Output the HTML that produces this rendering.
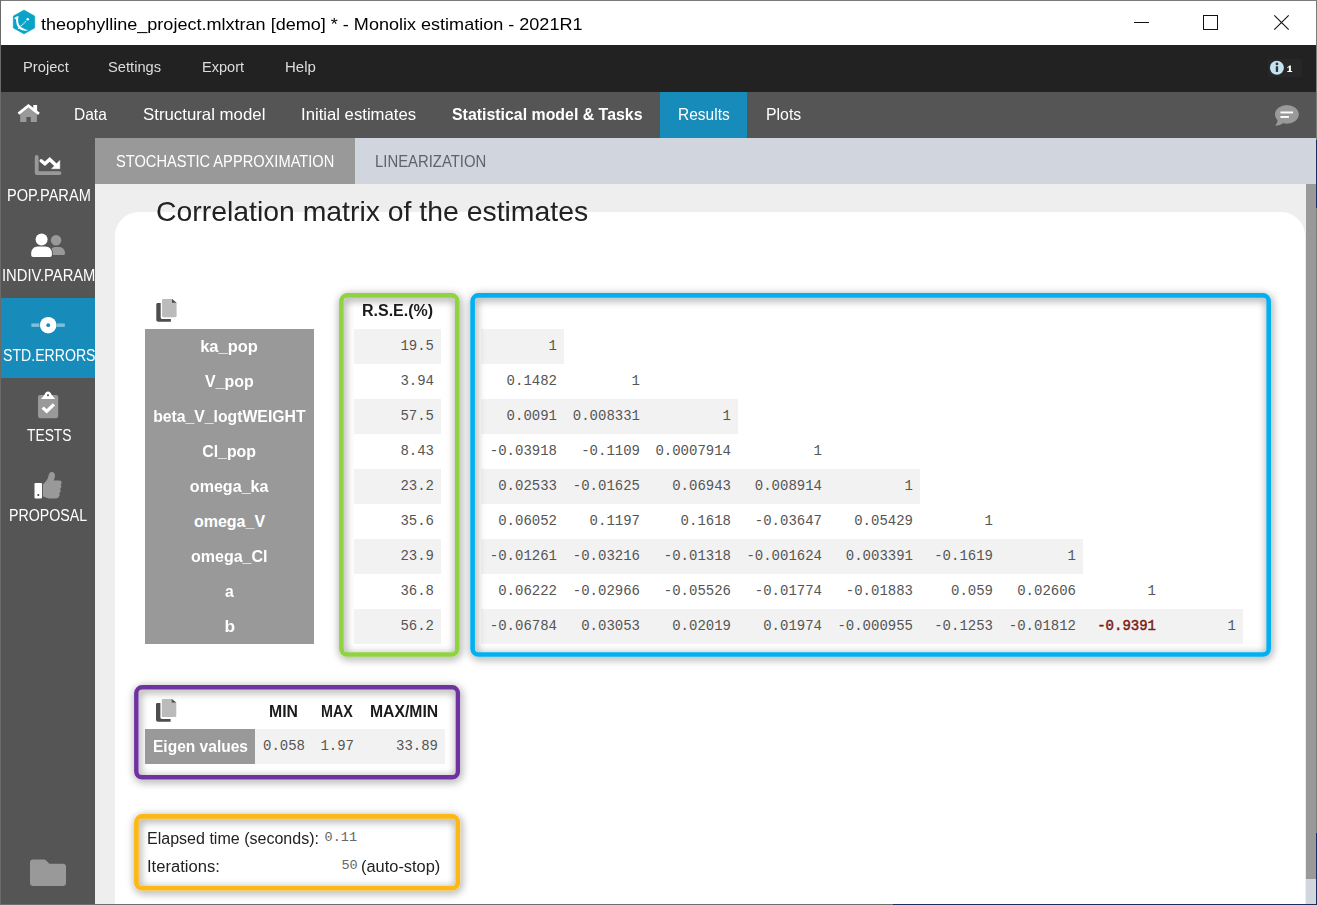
<!DOCTYPE html>
<html>
<head>
<meta charset="utf-8">
<title>Monolix</title>
<style>
*{box-sizing:border-box;margin:0;padding:0}
html,body{width:1317px;height:905px;overflow:hidden;background:#eeeeee;font-family:"Liberation Sans",sans-serif;}
.abs{position:absolute}
.t{position:absolute;white-space:nowrap;line-height:1;transform-origin:0 0}
#win{position:absolute;left:0;top:0;width:1317px;height:905px;overflow:hidden;background:#eeeeee}
#titlebar{left:1px;top:1px;width:1315px;height:44px;background:#fff}
#menubar{left:1px;top:45px;width:1315px;height:47px;background:#222222}
#navbar{left:1px;top:92px;width:1315px;height:46px;background:#555555}
#sidebar{left:1px;top:138px;width:94px;height:766px;background:#555555;overflow:hidden}
#subtabs{left:95px;top:138px;width:1221px;height:46px;background:#d0d5de}
#content{left:95px;top:184px;width:1211px;height:720px;background:#eeeeee}
#card{left:115px;top:212px;width:1190px;height:720px;background:#fff;border-radius:24px}
.mono{font-family:"Liberation Mono",monospace}
.box{position:absolute;border:4.6px solid;border-radius:7.5px;box-shadow:2px 2px 7px rgba(0,0,0,.42), inset 2px 2px 7px rgba(0,0,0,.42)}
.rh{position:absolute;left:145px;width:169px;height:35px;color:#fff;font-weight:bold;font-size:16px;text-align:center;line-height:35px;white-space:nowrap}
.cell{position:absolute;height:35px;line-height:35px;font-family:"Liberation Mono",monospace;font-size:14px;color:#555;text-align:right;padding-right:7px;white-space:nowrap}
.g{background:#f2f2f2}
.sx{display:inline-block;transform-origin:50% 50%}
svg{position:absolute;overflow:visible}
</style>
</head>
<body>
<div id="win">
  <div class="abs" id="titlebar"></div>
  <div class="abs" id="menubar"></div>
  <div class="abs" id="navbar"></div>
  <div class="abs" id="sidebar"></div>
  <div class="abs" id="subtabs"></div>
  <div class="abs" id="content"></div>
  <div class="abs" id="card"></div>

  <!-- TITLE -->
  <div class="t" id="ttl" style="left:40.80px;top:15.71px;font-size:17px;font-weight:normal;color:#000;transform:scaleX(1.0612)">theophylline_project.mlxtran [demo] * - Monolix estimation - 2021R1</div>

  <!-- MENU -->
  <div class="t" id="m1" style="left:22.50px;top:59.30px;font-size:15px;font-weight:normal;color:#dddddd;transform:scaleX(0.9810)">Project</div>
  <div class="t" id="m2" style="left:108.20px;top:59.30px;font-size:15px;font-weight:normal;color:#dddddd;transform:scaleX(0.9796)">Settings</div>
  <div class="t" id="m3" style="left:201.70px;top:59.30px;font-size:15px;font-weight:normal;color:#dddddd;transform:scaleX(0.9710)">Export</div>
  <div class="t" id="m4" style="left:284.80px;top:59.30px;font-size:15px;font-weight:normal;color:#dddddd;transform:scaleX(0.9981)">Help</div>

  <!-- NAV -->
  <div class="abs" style="left:660px;top:92px;width:87px;height:46px;background:#178bba"></div>
  <div class="t" id="n1" style="left:74.00px;top:106.03px;font-size:16.5px;font-weight:normal;color:#fff;transform:scaleX(0.9409)">Data</div>
  <div class="t" id="n2" style="left:142.50px;top:106.03px;font-size:16.5px;font-weight:normal;color:#fff;transform:scaleX(1.0188)">Structural model</div>
  <div class="t" id="n3" style="left:300.80px;top:106.03px;font-size:16.5px;font-weight:normal;color:#fff;transform:scaleX(1.0121)">Initial estimates</div>
  <div class="t" id="n4" style="left:451.50px;top:106.03px;font-size:16.5px;font-weight:bold;color:#fff;transform:scaleX(0.9632)">Statistical model &amp; Tasks</div>
  <div class="t" id="n5" style="left:678.30px;top:106.03px;font-size:16.5px;font-weight:normal;color:#fff;transform:scaleX(0.9395)">Results</div>
  <div class="t" id="n6" style="left:766.00px;top:106.03px;font-size:16.5px;font-weight:normal;color:#fff;transform:scaleX(0.9595)">Plots</div>

  <!-- SUBTABS -->
  <div class="abs" style="left:95px;top:138px;width:260px;height:46px;background:#999999"></div>
  <div class="t" id="s1" style="left:115.80px;top:153.03px;font-size:16.5px;font-weight:normal;color:#fff;transform:scaleX(0.8873)">STOCHASTIC APPROXIMATION</div>
  <div class="t" id="s2" style="left:375.40px;top:153.03px;font-size:16.5px;font-weight:normal;color:#5f636b;transform:scaleX(0.9014)">LINEARIZATION</div>

  <!-- SIDEBAR -->
  <div class="abs" style="left:1px;top:298px;width:94px;height:80px;background:#178bba"></div>
  <div class="abs" style="left:0;top:0;width:95px;height:905px;overflow:hidden">
  <div class="t" id="sb1" style="left:6.70px;top:188.26px;font-size:16px;font-weight:normal;color:#fff;transform:scaleX(0.9120)">POP.PARAM</div>
  <div class="t" id="sb2" style="left:2.10px;top:268.26px;font-size:16px;font-weight:normal;color:#fff;transform:scaleX(0.9215)">INDIV.PARAM</div>
  <div class="t" id="sb3" style="left:2.70px;top:347.96px;font-size:16px;font-weight:normal;color:#fff;transform:scaleX(0.8817)">STD.ERRORS</div>
  <div class="t" id="sb4" style="left:26.50px;top:428.26px;font-size:16px;font-weight:normal;color:#fff;transform:scaleX(0.8630)">TESTS</div>
  <div class="t" id="sb5" style="left:9.30px;top:508.26px;font-size:16px;font-weight:normal;color:#fff;transform:scaleX(0.8883)">PROPOSAL</div>
  </div>

  <!-- HEADING -->
  <div class="t" id="h1" style="left:156.20px;top:197.80px;font-size:28px;font-weight:normal;color:#222;transform:scaleX(1.0134)">Correlation matrix of the estimates</div>

  <!-- TABLE -->
  <div class="abs" style="left:145px;top:329px;width:169px;height:315px;background:#999999"></div>
  <div class="rh" style="top:329px"><span class="sx" style="transform:scaleX(1.0295)">ka_pop</span></div>
  <div class="cell g" style="left:354px;top:329px;width:87px">19.5</div>
  <div class="cell g" style="left:481px;top:329px;width:83px">1</div>
  <div class="rh" style="top:364px"><span class="sx" style="transform:scaleX(0.9951)">V_pop</span></div>
  <div class="cell" style="left:354px;top:364px;width:87px">3.94</div>
  <div class="cell" style="left:481px;top:364px;width:83px">0.1482</div>
  <div class="cell" style="left:564px;top:364px;width:83px">1</div>
  <div class="rh" style="top:399px"><span class="sx" style="transform:scaleX(0.9852)">beta_V_logtWEIGHT</span></div>
  <div class="cell g" style="left:354px;top:399px;width:87px">57.5</div>
  <div class="cell g" style="left:481px;top:399px;width:83px">0.0091</div>
  <div class="cell g" style="left:564px;top:399px;width:83px">0.008331</div>
  <div class="cell g" style="left:647px;top:399px;width:91px">1</div>
  <div class="rh" style="top:434px"><span class="sx" style="transform:scaleX(0.9931)">Cl_pop</span></div>
  <div class="cell" style="left:354px;top:434px;width:87px">8.43</div>
  <div class="cell" style="left:481px;top:434px;width:83px">-0.03918</div>
  <div class="cell" style="left:564px;top:434px;width:83px">-0.1109</div>
  <div class="cell" style="left:647px;top:434px;width:91px">0.0007914</div>
  <div class="cell" style="left:738px;top:434px;width:91px">1</div>
  <div class="rh" style="top:469px"><span class="sx" style="transform:scaleX(1.0049)">omega_ka</span></div>
  <div class="cell g" style="left:354px;top:469px;width:87px">23.2</div>
  <div class="cell g" style="left:481px;top:469px;width:83px">0.02533</div>
  <div class="cell g" style="left:564px;top:469px;width:83px">-0.01625</div>
  <div class="cell g" style="left:647px;top:469px;width:91px">0.06943</div>
  <div class="cell g" style="left:738px;top:469px;width:91px">0.008914</div>
  <div class="cell g" style="left:829px;top:469px;width:91px">1</div>
  <div class="rh" style="top:504px"><span class="sx" style="transform:scaleX(1.0000)">omega_V</span></div>
  <div class="cell" style="left:354px;top:504px;width:87px">35.6</div>
  <div class="cell" style="left:481px;top:504px;width:83px">0.06052</div>
  <div class="cell" style="left:564px;top:504px;width:83px">0.1197</div>
  <div class="cell" style="left:647px;top:504px;width:91px">0.1618</div>
  <div class="cell" style="left:738px;top:504px;width:91px">-0.03647</div>
  <div class="cell" style="left:829px;top:504px;width:91px">0.05429</div>
  <div class="cell" style="left:920px;top:504px;width:80px">1</div>
  <div class="rh" style="top:539px"><span class="sx" style="transform:scaleX(1.0029)">omega_Cl</span></div>
  <div class="cell g" style="left:354px;top:539px;width:87px">23.9</div>
  <div class="cell g" style="left:481px;top:539px;width:83px">-0.01261</div>
  <div class="cell g" style="left:564px;top:539px;width:83px">-0.03216</div>
  <div class="cell g" style="left:647px;top:539px;width:91px">-0.01318</div>
  <div class="cell g" style="left:738px;top:539px;width:91px">-0.001624</div>
  <div class="cell g" style="left:829px;top:539px;width:91px">0.003391</div>
  <div class="cell g" style="left:920px;top:539px;width:80px">-0.1619</div>
  <div class="cell g" style="left:1000px;top:539px;width:83px">1</div>
  <div class="rh" style="top:574px"><span class="sx" style="transform:scaleX(0.9852)">a</span></div>
  <div class="cell" style="left:354px;top:574px;width:87px">36.8</div>
  <div class="cell" style="left:481px;top:574px;width:83px">0.06222</div>
  <div class="cell" style="left:564px;top:574px;width:83px">-0.02966</div>
  <div class="cell" style="left:647px;top:574px;width:91px">-0.05526</div>
  <div class="cell" style="left:738px;top:574px;width:91px">-0.01774</div>
  <div class="cell" style="left:829px;top:574px;width:91px">-0.01883</div>
  <div class="cell" style="left:920px;top:574px;width:80px">0.059</div>
  <div class="cell" style="left:1000px;top:574px;width:83px">0.02606</div>
  <div class="cell" style="left:1083px;top:574px;width:80px">1</div>
  <div class="rh" style="top:609px"><span class="sx" style="transform:scaleX(1.0837)">b</span></div>
  <div class="cell g" style="left:354px;top:609px;width:87px">56.2</div>
  <div class="cell g" style="left:481px;top:609px;width:83px">-0.06784</div>
  <div class="cell g" style="left:564px;top:609px;width:83px">0.03053</div>
  <div class="cell g" style="left:647px;top:609px;width:91px">0.02019</div>
  <div class="cell g" style="left:738px;top:609px;width:91px">0.01974</div>
  <div class="cell g" style="left:829px;top:609px;width:91px">-0.000955</div>
  <div class="cell g" style="left:920px;top:609px;width:80px">-0.1253</div>
  <div class="cell g" style="left:1000px;top:609px;width:83px">-0.01812</div>
  <div class="cell g" style="left:1083px;top:609px;width:80px;color:#7d1a12;-webkit-text-stroke:0.45px #7d1a12">-0.9391</div>
  <div class="cell g" style="left:1163px;top:609px;width:80px">1</div>

  <!-- BOXES -->
  <svg width="1317" height="905" viewBox="0 0 1317 905" style="left:0;top:0">
    <defs><filter id="sh" x="0" y="0" width="1317" height="905" filterUnits="userSpaceOnUse">
      <feGaussianBlur in="SourceAlpha" stdDeviation="4" result="b"/>
      <feOffset in="b" dx="1.4" dy="1.5" result="o"/>
      <feComponentTransfer in="o" result="s"><feFuncA type="linear" slope="0.5"/></feComponentTransfer>
      <feMerge><feMergeNode in="s"/><feMergeNode in="SourceGraphic"/></feMerge>
    </filter></defs>
    <rect x="341.40" y="295.40" width="115.90" height="359.10" rx="5.70" fill="none" stroke="#90d340" stroke-width="4.6" filter="url(#sh)"/>
    <rect x="472.60" y="295.40" width="796.10" height="359.10" rx="5.70" fill="none" stroke="#00b0f0" stroke-width="4.6" filter="url(#sh)"/>
    <rect x="136.30" y="687.30" width="321.60" height="90.00" rx="5.80" fill="none" stroke="#7030a0" stroke-width="4.4" filter="url(#sh)"/>
    <rect x="136.40" y="816.40" width="321.40" height="71.90" rx="5.70" fill="none" stroke="#fdb813" stroke-width="4.6" filter="url(#sh)"/>
  </svg>

  <!-- RSE header -->
  <div class="t" id="rseh" style="left:362.10px;top:303.06px;font-size:16px;font-weight:bold;color:#1a1a1a;transform:scaleX(0.9996)">R.S.E.(%)</div>

  <!-- EIGEN -->
  <div class="t" id="e1" style="left:269.40px;top:704.16px;font-size:16px;font-weight:bold;color:#1a1a1a;transform:scaleX(0.9854)">MIN</div>
  <div class="t" id="e2" style="left:321.00px;top:704.16px;font-size:16px;font-weight:bold;color:#1a1a1a;transform:scaleX(0.8942)">MAX</div>
  <div class="t" id="e3" style="left:369.50px;top:704.16px;font-size:16px;font-weight:bold;color:#1a1a1a;transform:scaleX(0.9837)">MAX/MIN</div>
  <div class="abs" style="left:145px;top:729px;width:110px;height:35px;background:#999999"></div>
  <div class="t" id="e4" style="left:153.20px;top:738.96px;font-size:16px;font-weight:bold;color:#fff;transform:scaleX(0.9711)">Eigen values</div>
  <div class="cell g" style="left:255px;top:729px;width:58px;padding-right:8px">0.058</div>
  <div class="cell g" style="left:313px;top:729px;width:48px">1.97</div>
  <div class="cell g" style="left:361px;top:729px;width:84px">33.89</div>

  <!-- ELAPSED -->
  <div class="t" id="l1" style="left:147.00px;top:830.96px;font-size:16px;font-weight:normal;color:#222;transform:scaleX(1.0021)">Elapsed time (seconds):</div>
  <div class="t mono" id="l2" style="left:324.60px;top:830.95px;font-size:13.5px;font-weight:normal;color:#666;transform:scaleX(1.0000)">0.11</div>
  <div class="t" id="l3" style="left:147.00px;top:858.86px;font-size:16px;font-weight:normal;color:#222;transform:scaleX(1.0361)">Iterations:</div>
  <div class="t mono" id="l4" style="left:341.40px;top:858.65px;font-size:13.5px;font-weight:normal;color:#666;transform:scaleX(1.0000)">50</div>
  <div class="t" id="l5" style="left:360.50px;top:858.86px;font-size:16px;font-weight:normal;color:#222;transform:scaleX(1.0249)">(auto-stop)</div>

  <!-- ICONS -->
  <svg width="1317" height="905" viewBox="0 0 1317 905" style="left:0;top:0">
    <!-- app logo -->
    <g>
      <polygon points="24,9.9 34.8,16 34.8,27.9 24,34.1 13.2,27.9 13.2,16" fill="#08a4c7" stroke="#08a4c7" stroke-width="0.4" stroke-linejoin="round"/>
      <path d="M14.3,18.6 C14.8,17.2 16.8,15.8 18.6,16.2 C18,18.5 18.1,20.8 18.4,22.9 C19,25.5 21,27.3 23,28.2 C24.8,29.1 26.8,29.8 28.4,30.3 C26,31 23.5,30.8 21.5,29.9 C19,28.6 17.6,27 16.9,24.9 C16.3,23.2 16,21 16,19.3 C15.4,19.4 14.8,19.1 14.3,18.6 Z" fill="#fff"/>
      <line x1="18.2" y1="28.7" x2="25.8" y2="21.3" stroke="#fff" stroke-width="1.1" stroke-dasharray="1.2 0.7"/>
      <circle cx="27.7" cy="19.2" r="1.3" fill="#fff"/>
    </g>
    <!-- window controls -->
    <rect x="1134" y="22" width="15" height="1" fill="#111"/>
    <rect x="1203.5" y="15.5" width="14" height="14" fill="none" stroke="#111" stroke-width="1"/>
    <path d="M1274.3,15.3 L1288.7,29.7 M1288.7,15.3 L1274.3,29.7" stroke="#111" stroke-width="1.1" fill="none"/>
    <!-- info badge -->
    <rect x="1268" y="59" width="34" height="18" fill="#272727"/>
    <circle cx="1276.9" cy="67.8" r="7" fill="#c3e2f2"/>
    <rect x="1275.8" y="66.3" width="2.3" height="5.6" fill="#333"/>
    <circle cx="1276.95" cy="63.9" r="1.35" fill="#333"/>
    <path d="M1287.2,67.4 L1289.6,65.6 L1290.9,65.6 L1290.9,71 L1292.2,71 L1292.2,71.9 L1287.3,71.9 L1287.3,71 L1288.9,71 L1288.9,67.3 L1287.2,68.3 Z" fill="#fff"/>
    <!-- home -->
    <path d="M20.2,112.9 L28.4,106.6 L36.9,113.2 L36.9,121.9 L30.7,121.9 L30.7,117 L26.4,117 L26.4,121.9 L20.2,121.9 Z" fill="#999"/>
    <rect x="33.3" y="105" width="3.8" height="6.5" fill="#fff"/>
    <path d="M19.5,112.8 L28.4,105.7 L37.9,113" fill="none" stroke="#fff" stroke-width="2.7" stroke-linecap="square" stroke-linejoin="miter"/>
    <!-- comment -->
    <ellipse cx="1286.9" cy="114.3" rx="11.9" ry="9.4" fill="#999"/>
    <path d="M1277.6,118.5 C1277.8,121.5 1276.8,124 1275.1,125.7 C1278.5,125.7 1281.5,124.6 1283.5,122.8 Z" fill="#999"/>
    <rect x="1280.4" y="111.5" width="12.7" height="1.9" fill="#fff"/>
    <rect x="1280.4" y="116" width="8.5" height="1.9" fill="#fff"/>
    <!-- POP.PARAM icon -->
    <path d="M36.7,157 L36.7,173.1 L59.5,173.1" fill="none" stroke="#999" stroke-width="3.8" stroke-linecap="round" stroke-linejoin="round"/>
    <path d="M41.2,160.8 L44.9,163.8 L49.7,159.4 L56.5,165.8" fill="none" stroke="#fff" stroke-width="3.4" stroke-linecap="round" stroke-linejoin="miter"/>
    <path d="M59.8,160.4 L59.8,168.7 L51.6,168.7 Z" fill="#fff" stroke="#fff" stroke-width="0.5" stroke-linejoin="round"/>
    <!-- INDIV.PARAM icon -->
    <circle cx="56.1" cy="240.2" r="5.2" fill="#999"/>
    <path d="M50,255.1 L50,252.5 C50,249 52.5,246.9 55.5,246.9 L59,246.9 C62.5,246.9 65,249.5 65,253 L65,253.6 C65,254.5 64.3,255.1 63.5,255.1 Z" fill="#999"/>
    <circle cx="41.6" cy="239.4" r="6.6" fill="#555"/>
    <path d="M30.4,257.8 L30.4,253 C30.4,248.6 33.6,245.6 38,245.6 L45.2,245.6 C49.6,245.6 52.8,248.6 52.8,253 L52.8,257.8 Z" fill="#555"/>
    <circle cx="41.6" cy="239.4" r="6" fill="#fff"/>
    <path d="M31.2,255 L31.2,253.2 C31.2,249.2 34,246.4 38,246.4 L45.2,246.4 C49.2,246.4 51.9,249.2 51.9,253.2 L51.9,255 C51.9,256.2 51,257 50,257 L33.1,257 C32,257 31.2,256.2 31.2,255 Z" fill="#fff"/>
    <!-- STD.ERRORS icon -->
    <rect x="31.4" y="323.4" width="33.4" height="3.5" fill="#fff" opacity=".45"/>
    <circle cx="48.2" cy="325.2" r="8.3" fill="#fff" stroke="#178bba" stroke-width="1.6" paint-order="stroke"/>
    <circle cx="48.2" cy="325.2" r="1.9" fill="#178bba"/>
    <!-- TESTS icon -->
    <rect x="38" y="394.9" width="20.2" height="23.3" rx="2.2" fill="#999"/>
    <path d="M41.1,398.9 L44.5,394.8 C45,392.9 46.3,391.6 48,391.6 C49.7,391.6 51,392.9 51.6,394.8 L55.1,398.9 Z" fill="#fff"/>
    <circle cx="48" cy="395.3" r="1" fill="#444"/>
    <path d="M42.6,407.6 L46.7,411.3 L53.9,404.3" fill="none" stroke="#fff" stroke-width="3.2" stroke-linecap="butt" stroke-linejoin="miter"/>
    <!-- PROPOSAL icon -->
    <rect x="34.5" y="483.1" width="7.5" height="15.3" rx="0.8" fill="#fff"/>
    <circle cx="38.3" cy="495" r="1.05" fill="#444"/>
    <path d="M42.9,484.2 C45.5,482.5 47.6,479.5 48.3,476.8 C48.7,474.6 49.3,472 51.6,471.9 C54,471.9 55.2,473.8 55,476 C54.8,477.8 54.2,479.2 53.7,480.4 L59.6,480.4 C60.9,480.4 61.6,481.4 61.6,482.4 C61.6,483.4 61.2,484.2 60.4,484.6 C61.2,485.2 61.4,486 61.3,486.8 C61.2,487.8 60.7,488.5 59.9,488.9 C60.6,489.6 60.7,490.4 60.6,491.2 C60.4,492.2 59.9,492.9 59.2,493.2 C59.7,494 59.7,494.8 59.5,495.6 C59,497.4 57.5,498.6 55.5,498.6 L51.5,498.6 C48.5,498.6 45.8,497.6 42.9,496.2 Z" fill="#999"/>
    <!-- folder -->
    <path d="M33,859.5 L44.2,859.5 C44.8,859.5 45.2,859.7 45.6,860.1 L49.4,863.8 L63,863.8 C64.7,863.8 66,865.1 66,866.8 L66,883.1 C66,884.8 64.7,886.1 63,886.1 L33,886.1 C31.3,886.1 30,884.8 30,883.1 L30,862.5 C30,860.8 31.3,859.5 33,859.5 Z" fill="#999"/>
    <!-- copy icons -->
    <g>
      <path d="M157.6,303.1 L160.7,303.1 L160.7,317.6 C160.7,318.4 161.3,319 162.1,319 L170.9,319 L170.9,321.8 L158.3,321.8 C157.2,321.8 156.3,320.9 156.3,319.8 L156.3,304.4 C156.3,303.7 156.9,303.1 157.6,303.1 Z" fill="#4d4d4d"/>
      <path d="M163.3,299 L172,299 L176.6,302.7 L176.6,316 C176.6,316.7 176.1,317.2 175.4,317.2 L163.3,317.2 C162.6,317.2 162.1,316.7 162.1,316 L162.1,300.2 C162.1,299.5 162.6,299 163.3,299 Z" fill="#bbbbbb"/>
      <path d="M172,299 L176.6,302.7 L172,302.7 Z" fill="#4d4d4d"/>
    </g>
    <g transform="translate(-0.3,399.9)">
      <path d="M157.6,303.1 L160.7,303.1 L160.7,317.6 C160.7,318.4 161.3,319 162.1,319 L170.9,319 L170.9,321.8 L158.3,321.8 C157.2,321.8 156.3,320.9 156.3,319.8 L156.3,304.4 C156.3,303.7 156.9,303.1 157.6,303.1 Z" fill="#4d4d4d"/>
      <path d="M163.3,299 L172,299 L176.6,302.7 L176.6,316 C176.6,316.7 176.1,317.2 175.4,317.2 L163.3,317.2 C162.6,317.2 162.1,316.7 162.1,316 L162.1,300.2 C162.1,299.5 162.6,299 163.3,299 Z" fill="#bbbbbb"/>
      <path d="M172,299 L176.6,302.7 L172,302.7 Z" fill="#4d4d4d"/>
    </g>
  </svg>

  <!-- SCROLLBAR -->
  <div class="abs" style="left:1306px;top:184px;width:10px;height:720px;background:#d0d5de"></div>
  <div class="abs" style="left:1306px;top:184px;width:10px;height:695px;background:#999999"></div>

  <!-- window borders -->
  <div class="abs" style="left:0;top:0;width:1317px;height:1px;background:#7a7a7a"></div>
  <div class="abs" style="left:0;top:0;width:1px;height:905px;background:#6a6a6a"></div>
  <div class="abs" style="left:0;top:904px;width:893px;height:1px;background:#6e6e6e"></div>
  <div class="abs" style="left:893px;top:904px;width:424px;height:1px;background:#1f2d5a"></div>
  <div class="abs" style="left:1316px;top:0;width:1px;height:905px;background:#7a7a7a"></div>
  <div class="abs" style="left:1316px;top:140px;width:1px;height:68px;background:#1f2d5a"></div>
  <div class="abs" style="left:1316px;top:833px;width:1px;height:72px;background:#1f2d5a"></div>
</div>
</body>
</html>
